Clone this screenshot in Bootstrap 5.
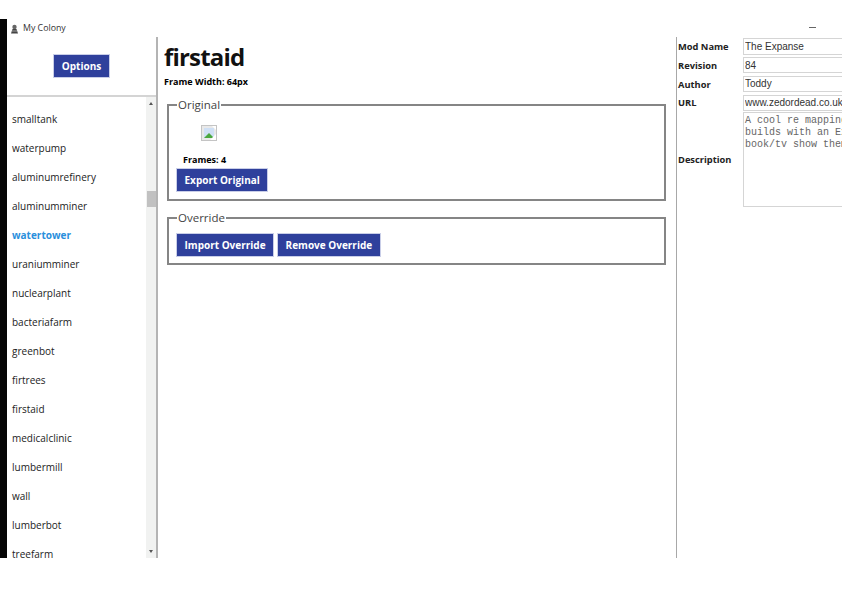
<!DOCTYPE html>
<html lang="en">
<head>
  <meta charset="UTF-8">
  <title>My Colony</title>
  <link href="https://cdn.jsdelivr.net/npm/bootstrap@5.3.0/dist/css/bootstrap.min.css" rel="stylesheet">
  <style>
    html, body { height: 595px; overflow: hidden; background: #fff; }
    body { font-family: "Open Sans", "Noto Sans", sans-serif; color: #000; padding-top: 19px; }
    .app-shell { width: 842px; height: 539px; }
    .desktop-strip { width: 7px; background: #050505; }
    .title-row { height: 18px; font-size: 8.8px; color: #333; padding: 1px 0 0 3px; }
    .min-mark { width: 7px; height: 1px; background: #666; margin: 0 26px 2px auto; }
    .side-pane { width: 151px; border-right: 2px solid #b4b4b4; }
    .options-area { height: 60px; border-bottom: 2px solid #d4d4d4; }
    .blue-btn {
      background: #2f409c; color: #fff; font-weight: 700; font-size: 10px; line-height: 1;
      border: 1px solid #c9cee8; border-radius: 0; padding: 0 7.5px; height: 24px;
    }
    .blue-btn:hover { background: #2f409c; color: #fff; }
    .list-pane { height: 461px; overflow: hidden; }
    .item-list { width: 139px; padding: 8px 0 0 5px; }
    .item-list div { height: 29px; line-height: 29px; font-size: 10px; color: #222; white-space: nowrap; }
    .item-list .picked { color: #2a8fdc; font-weight: 700; }
    .scroll-rail { width: 10px; background: #f1f2f1; position: relative; }
    .scroll-thumb { position: absolute; left: 1px; top: 94px; width: 9px; height: 16px; background: #c1c1c1; }
    .scroll-up, .scroll-down { position: absolute; left: 3px; width: 0; height: 0; border-left: 2.5px solid transparent; border-right: 2.5px solid transparent; }
    .scroll-up { top: 5px; border-bottom: 3px solid #555; }
    .scroll-down { bottom: 5px; border-top: 3px solid #555; }
    .main-pane { width: 518px; padding: 5px 10px 0 6px; }
    .page-name { font-size: 24px; letter-spacing: -.8px; font-weight: 700; line-height: 30px; margin: 0; color: #111; }
    .frame-note { font-size: 9px; font-weight: 700; line-height: 12px; margin: 4px 0 0; }
    .group-box { border: 2px solid #858585; margin: 0 0 0 3px; padding: 0 7px; min-width: 0; }
    .group-box legend {
      float: none; width: auto; font-size: 11.5px; line-height: 16px; margin: -9px 0 0 1px; padding: 0 1px;
      color: #444; font-weight: 400;
    }
    .box-original { height: 104px; margin-top: 9px; }
    .box-override { height: 55px; margin-top: 9px; }
    .broken-pic { display: block; margin: 12px 0 0 25px; }
    .frames-note { font-size: 9px; font-weight: 700; line-height: 12px; margin: 13px 0 0 7px; }
    .override-btns { gap: 3px; margin-top: 7px; }
    .props-pane { width: 166px; border-left: 1px solid #a8a8a8; padding-left: 1px; overflow: hidden; }
    .prop-row { height: 18.8px; font-size: 9.3px; font-weight: 700; }
    .prop-row label, .desc-row label { width: 65px; flex: none; color: #222; padding-top: 1px; }
    .desc-row { font-size: 9.3px; font-weight: 700; }
    .prop-field {
      width: 240px; flex: none; height: 16.5px; border: 1px solid #d5d5d5; padding: 0 1px; border-radius: 0;
      font-family: "Liberation Sans", Arial, sans-serif; font-size: 10px; color: #333; outline: none;
    }
    .prop-area {
      width: 300px; flex: none; height: 95px; border: 1px solid #d5d5d5; padding: 2px 1px; border-radius: 0; resize: none;
      font-family: "Liberation Mono", "Courier New", monospace; font-size: 10px; line-height: 12px; color: #666;
      white-space: pre; overflow: hidden; outline: none;
    }
  </style>
</head>
<body>
  <div class="app-shell d-flex">
    <div class="desktop-strip flex-shrink-0"></div>
    <div class="d-flex flex-column flex-grow-1" style="min-width:0">
      <div class="title-row d-flex align-items-center">
        <svg width="9" height="10" viewBox="0 0 9 10" class="me-1 flex-shrink-0">
          <circle cx="4.5" cy="3" r="2.2" fill="#666"/>
          <path d="M1 9.5 L2.5 5 H6.5 L8 9.5 Z" fill="#444"/>
          <path d="M2 7 H7" stroke="#ccc" stroke-width=".7"/>
        </svg>
        <span>My Colony</span>
        <span class="min-mark"></span>
      </div>
      <div class="d-flex flex-grow-1" style="min-height:0">
        <div class="side-pane flex-shrink-0">
          <div class="options-area d-flex justify-content-center align-items-center">
            <button type="button" class="btn blue-btn">Options</button>
          </div>
          <div class="list-pane d-flex">
            <div class="item-list">
              <div>smalltank</div>
              <div>waterpump</div>
              <div>aluminumrefinery</div>
              <div>aluminumminer</div>
              <div class="picked">watertower</div>
              <div>uraniumminer</div>
              <div>nuclearplant</div>
              <div>bacteriafarm</div>
              <div>greenbot</div>
              <div>firtrees</div>
              <div>firstaid</div>
              <div>medicalclinic</div>
              <div>lumbermill</div>
              <div>wall</div>
              <div>lumberbot</div>
              <div>treefarm</div>
            </div>
            <div class="scroll-rail">
              <span class="scroll-up"></span>
              <span class="scroll-thumb"></span>
              <span class="scroll-down"></span>
            </div>
          </div>
        </div>
        <div class="main-pane flex-shrink-0">
          <h1 class="page-name">firstaid</h1>
          <p class="frame-note">Frame Width: 64px</p>
          <fieldset class="group-box box-original">
            <legend>Original</legend>
            <svg class="broken-pic" width="16" height="16" viewBox="0 0 16 16">
              <rect x=".5" y=".5" width="15" height="15" fill="#e9e9e9" stroke="#c4c4c4"/>
              <rect x="3" y="3" width="10" height="10" fill="#cfe0f5"/>
              <path d="M3 13 L8 8 L13 13 Z" fill="#4ba83f"/>
              <path d="M11 1 L15 5 L15 1 Z" fill="#fff"/>
              <path d="M9 15 L15 9 L15 15 Z" fill="#fff"/>
            </svg>
            <p class="frames-note">Frames: 4</p>
            <button type="button" class="btn blue-btn">Export Original</button>
          </fieldset>
          <fieldset class="group-box box-override">
            <legend>Override</legend>
            <div class="d-flex override-btns">
              <button type="button" class="btn blue-btn">Import Override</button>
              <button type="button" class="btn blue-btn">Remove Override</button>
            </div>
          </fieldset>
        </div>
        <div class="props-pane flex-shrink-0">
          <div class="prop-row d-flex align-items-center"><label>Mod Name</label><input class="prop-field" value="The Expanse"></div>
          <div class="prop-row d-flex align-items-center"><label>Revision</label><input class="prop-field" value="84"></div>
          <div class="prop-row d-flex align-items-center"><label>Author</label><input class="prop-field" value="Toddy"></div>
          <div class="prop-row d-flex align-items-center"><label>URL</label><input class="prop-field" value="www.zedordead.co.uk"></div>
          <div class="desc-row d-flex align-items-center">
            <label>Description</label>
            <textarea class="prop-area">A cool re mapping of the colony
builds with an Expanse
book/tv show theme</textarea>
          </div>
        </div>
      </div>
    </div>
  </div>
</body>
</html>
